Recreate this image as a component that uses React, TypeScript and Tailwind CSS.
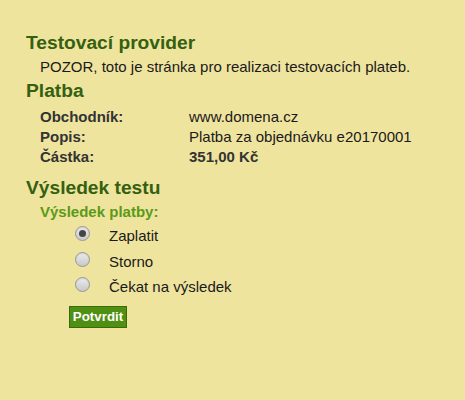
const options = [
  { label: "Zaplatit", checked: true },
  { label: "Storno", checked: false },
  { label: "Čekat na výsledek", checked: false },
];

const rows = [
  { label: "Obchodník:", value: "www.domena.cz", bold: false },
  { label: "Popis:", value: "Platba za objednávku e20170001", bold: false },
  { label: "Částka:", value: "351,00 Kč", bold: true },
];

const Radio = ({ checked }: { checked: boolean }) => (
  <span className="mt-[3px] flex h-[15px] w-[15px] shrink-0 items-center justify-center rounded-full border border-[#979797] bg-gradient-to-b from-[#ececec] to-[#c8c8c8] shadow-[inset_0_1px_1px_rgba(0,0,0,0.1)]">
    {checked && <span className="h-[7px] w-[7px] rounded-full bg-[#444]" />}
  </span>
);

export default function App() {
  return (
    <div className="min-h-[400px] w-full bg-[#efe49e] pl-[26px] pt-[32px] text-[15px] text-[#1a1a1a] [font-family:Arial,'Liberation_Sans',sans-serif]">
      {/* Header */}
      <h1 className="text-[19.2px] font-bold leading-[22px] text-[#346010]">Testovací provider</h1>
      <p className="mt-[3px] pl-[14px] leading-[20px]">
        POZOR, toto je stránka pro realizaci testovacích plateb.
      </p>

      {/* Payment */}
      <h2 className="mt-[3px] text-[19.2px] font-bold leading-[22px] text-[#346010]">Platba</h2>
      <div className="mt-[5px] pl-[14px]">
        {rows.map((r) => (
          <div key={r.label} className="flex leading-[20px]">
            <span className="w-[149px] font-bold text-[#333]">{r.label}</span>
            <span className={r.bold ? "font-bold text-[#333]" : ""}>{r.value}</span>
          </div>
        ))}
      </div>

      {/* Result */}
      <h2 className="mt-[10px] text-[19.2px] font-bold leading-[22px] text-[#346010]">Výsledek testu</h2>
      <div className="mt-[3px] pl-[14px] font-bold leading-[20px] text-[#5a9a18]">Výsledek platby:</div>
      <div className="mt-[1px] pl-[49px]">
        {options.map((o) => (
          <label key={o.label} className="flex h-[25.6px] items-start leading-[25px]">
            <Radio checked={o.checked} />
            <span className="ml-[19px]">{o.label}</span>
          </label>
        ))}
      </div>
      <button className="mt-[6px] ml-[43px] flex h-[22px] w-[58px] items-center justify-center border border-[#3b6a0c] bg-[#4f8f12] text-[13.33px] font-bold text-white">
        Potvrdit
      </button>
    </div>
  );
}
